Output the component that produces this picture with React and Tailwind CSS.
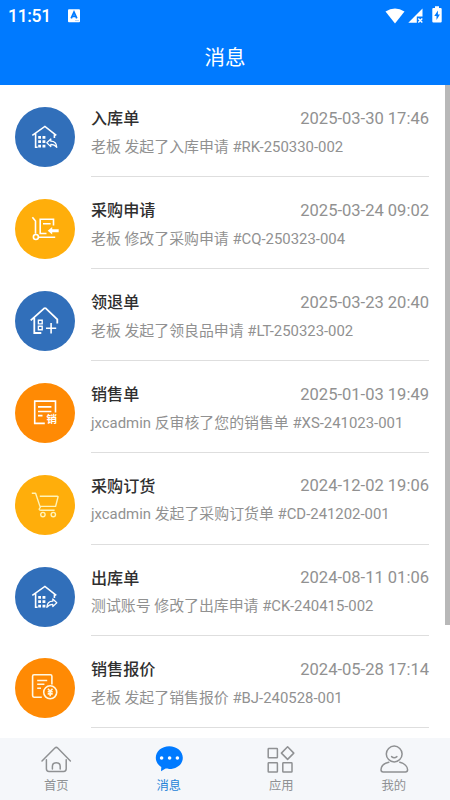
import React from 'react'

const MESSAGES = [
  { title: '入库单', time: '2025-03-30 17:46', text: '老板 发起了入库申请 #RK-250330-002', icon: StockInIcon, color: 'bg-[#316fba]' },
  { title: '采购申请', time: '2025-03-24 09:02', text: '老板 修改了采购申请 #CQ-250323-004', icon: TrolleyIcon, color: 'bg-[#ffae0b]' },
  { title: '领退单', time: '2025-03-23 20:40', text: '老板 发起了领良品申请 #LT-250323-002', icon: HousePlusIcon, color: 'bg-[#316fba]' },
  { title: '销售单', time: '2025-01-03 19:49', text: 'jxcadmin 反审核了您的销售单 #XS-241023-001', icon: SaleIcon, color: 'bg-[#ff8a04]' },
  { title: '采购订货', time: '2024-12-02 19:06', text: 'jxcadmin 发起了采购订货单 #CD-241202-001', icon: CartIcon, color: 'bg-[#ffae0b]' },
  { title: '出库单', time: '2024-08-11 01:06', text: '测试账号 修改了出库申请 #CK-240415-002', icon: StockOutIcon, color: 'bg-[#316fba]' },
  { title: '销售报价', time: '2024-05-28 17:14', text: '老板 发起了销售报价 #BJ-240528-001', icon: QuoteIcon, color: 'bg-[#ff8a04]' },
]

const TABS = [
  { label: '首页', icon: HomeTab },
  { label: '消息', icon: ChatTab, active: true },
  { label: '应用', icon: AppsTab },
  { label: '我的', icon: MineTab },
]

function Glyph({ children }) {
  return (
    <svg viewBox="0 0 60 60" className="w-full h-full" fill="none" stroke="#fff" strokeWidth="1.6">
      {children}
    </svg>
  )
}

function Warehouse() {
  return (
    <>
      <path d="M17.3 28.3 L29.9 19.4 L41.3 28.3 M20.6 26.5 V40.3 H22.6 M39.4 27 V31" />
      <path fill="#fff" stroke="none" d="M23.2 29h2.8v2.8h-2.8z M27.5 29h2.9v2.8h-2.9z M23.2 33.3h2.8v2.8h-2.8z M27.5 33.3h2.9v2.8h-2.9z M23.2 37.8h2.8v2.8h-2.8z M27.5 37.8h2.9v2.8h-2.9z" />
    </>
  )
}

function StockInIcon() {
  return (
    <Glyph>
      <Warehouse />
      <path strokeWidth="1.2" strokeLinejoin="round" d="M31.8 35.7 L35.8 32 V34.2 C39.6 34.2 41.6 36.5 41.8 40.4 C40 38.1 38.4 37.4 35.8 37.4 V39.6 Z" />
    </Glyph>
  )
}

function StockOutIcon() {
  return (
    <Glyph>
      <Warehouse />
      <path strokeWidth="1.2" strokeLinejoin="round" d="M41.8 35.7 L37.8 32 V34.2 C34 34.2 32 36.5 31.8 40.4 C33.6 38.1 35.2 37.4 37.8 37.4 V39.6 Z" />
    </Glyph>
  )
}

function TrolleyIcon() {
  return (
    <Glyph>
      <path d="M17.4 18.2 L20.5 22 V34.8 M23.2 38.3 H40.2" />
      <circle cx="20.9" cy="38" r="2.5" />
      <path d="M38.5 26.5 V20.3 H25.2 V34.5 H31.5 M28 24.8 H35.6" />
      <path fill="#fff" stroke="none" d="M32.7 31.7 L37.2 27.9 V30.2 H43.7 V33.2 H37.2 V35.6 Z" />
    </Glyph>
  )
}

function HousePlusIcon() {
  return (
    <Glyph>
      <path strokeWidth="1.8" d="M15.7 29.4 L28.9 17.6 Q30 16.8 31.1 17.6 L42.3 28.4 V32.6 M19.3 26.8 V42 H26.3" />
      <path strokeWidth="1.4" d="M23.4 29.3h3.8v3.6h-3.8z M23.4 35.2h3.8v3.6h-3.8z" />
      <path d="M31 37.2 H41.2 M36.1 32 V42.5" />
    </Glyph>
  )
}

function SaleIcon() {
  return (
    <Glyph>
      <path d="M40.5 29.5 V18.1 H19.7 V40.4 H29.8 M23 23.9 H36.4 M23 28.5 H36.4 M23 32.6 H27.5" />
      <text x="31.6" y="40.3" fill="#fff" stroke="none" className="text-[10.5px] font-bold font-['Noto_Sans_CJK_SC',sans-serif]">销</text>
    </Glyph>
  )
}

function CartIcon() {
  return (
    <Glyph>
      <g stroke="#fff3b8" strokeWidth="1.4" strokeLinejoin="round">
        <path d="M16.8 18.2 H20.6 L25.3 32.4 Q22.8 35.2 25.8 35.2 H39.6 M24.8 21.2 H42.3 Q43.2 21.2 43 22 L40.6 31.4 H25" />
        <circle cx="27.9" cy="39.6" r="2.2" />
        <circle cx="38.3" cy="39.6" r="2.2" />
      </g>
    </Glyph>
  )
}

function QuoteIcon() {
  return (
    <Glyph>
      <g stroke="#fff8e4">
        <path d="M36.9 26.5 V18.2 Q36.9 16.7 35.4 16.7 H19 Q17.6 16.7 17.6 18.2 V37.6 Q17.6 39.2 19 39.2 H26.8" />
        <path d="M22.2 22.5 H32.2 M22.2 26.2 H29.4 M22.2 30.2 H26" />
        <circle cx="35.2" cy="34.3" r="6.5" />
        <path d="M32.9 30.8 L35.2 33.3 L37.5 30.8 M35.2 33.3 V38.2 M32.7 33.8 H37.7 M32.7 35.9 H37.7" />
      </g>
    </Glyph>
  )
}

function HomeTab() {
  return (
    <svg viewBox="0 0 32 30" className="w-8 h-[30px]" fill="none" stroke="#8f9193" strokeWidth="1.5" strokeLinecap="round">
      <path d="M2 16 L14.9 3 Q16.3 1.7 17.7 3 L30.4 16" />
      <path d="M6.4 14.8 V23.8 Q6.4 26.5 9 26.5 H23.6 Q26.2 26.5 26.2 23.8 V14.8" />
      <path d="M12.4 24 V21.5 Q12.4 17.7 16.3 17.7 Q20.2 17.7 20.2 21.5 V24" />
    </svg>
  )
}

function ChatTab() {
  return (
    <svg viewBox="0 0 32 30" className="w-8 h-[30px]">
      <path fill="#007aff" d="M16.2 1.2 C23.8 1.2 29.8 6.2 29.8 12.8 C29.8 19.5 23.8 24 16.2 24 C14.8 24 13.4 23.8 12.6 23.6 L8 26.2 L8.3 22.1 C5 20 2.8 16.7 2.8 12.8 C2.8 6.2 8.7 1.2 16.2 1.2 Z" />
      <g fill="#fff">
        <circle cx="8.6" cy="13" r="1.8" />
        <circle cx="16.6" cy="13" r="1.8" />
        <circle cx="24.4" cy="13" r="1.8" />
      </g>
    </svg>
  )
}

function AppsTab() {
  return (
    <svg viewBox="0 0 32 30" className="w-8 h-[30px]" fill="none" stroke="#8f9193" strokeWidth="1.5" strokeLinejoin="round">
      <rect x="3.2" y="3.6" width="9.2" height="9.2" rx="0.6" />
      <path d="M22.6 1.8 L28.8 8.1 L22.6 14.4 L16.4 8.1 Z" />
      <rect x="3.2" y="17.8" width="9.2" height="9.2" rx="0.6" />
      <rect x="17.8" y="17.8" width="9.2" height="9.2" rx="0.6" />
    </svg>
  )
}

function MineTab() {
  return (
    <svg viewBox="0 0 32 30" className="w-8 h-[30px]" fill="none" stroke="#8f9193" strokeWidth="1.5" strokeLinecap="round">
      <circle cx="16.2" cy="9" r="7.9" />
      <path d="M13.6 11.6 Q16.2 13.8 18.9 11.6" />
      <path d="M10.8 17.2 C6 18.4 3 21.6 3 24.8 Q3 27 5.2 27 H27.4 Q29.6 27 29.6 24.8 C29.6 21.6 26.5 18.4 21.8 17.2" />
    </svg>
  )
}

function StatusBar() {
  return (
    <div className="flex items-center h-8 pl-[8px] pr-[8px]">
      <span className="text-[17.5px] leading-none font-medium w-[44px] whitespace-nowrap tracking-[-0.3px] pt-px">11:51</span>
      <svg viewBox="0 0 12 14" className="w-3 h-[14px] ml-4">
        <rect width="12" height="13" y="0.2" rx="1" fill="#fff" />
        <path d="M3.2 9.4 L6 3.2 L8.8 9.4 M4.3 7.4 H7.7" fill="none" stroke="#007aff" strokeWidth="1.8" />
        <path d="M7 11.6 H11" stroke="#9cc8f8" strokeWidth="0.8" />
      </svg>
      <div className="ml-auto flex items-center -mt-px">
        <svg viewBox="0 0 20 16" className="w-5 h-4">
          <path fill="#fff" d="M0.5 3.6 Q10 -2.8 19.5 3.6 L10 15.6 Z" />
        </svg>
        <svg viewBox="0 0 15 15" className="w-[15px] h-[15px] ml-[3px]">
          <path fill="#fff" d="M14.5 0.5 V8.5 H8.8 V14.8 H0.3 Z" />
          <path stroke="#fff" strokeWidth="1.4" d="M10.3 10.4 L14.3 14.4 M14.3 10.4 L10.3 14.4" />
        </svg>
        <svg viewBox="0 0 10 17" className="w-[10px] h-[17px] ml-[9px] -mt-[2px]">
          <path fill="#fff" d="M3 0.3 H7 V2 H8.6 Q9.7 2 9.7 3.1 V15.5 Q9.7 16.6 8.6 16.6 H1.4 Q0.3 16.6 0.3 15.5 V3.1 Q0.3 2 1.4 2 H3 Z" />
          <path fill="#007aff" d="M5.9 4.5 L2.3 10 H4.5 V14 L7.9 8.4 H5.9 Z" />
        </svg>
      </div>
    </div>
  )
}

function MessageRow({ item }) {
  const Icon = item.icon
  return (
    <div className="flex h-[91.85px] pl-[15px] pr-[21px]">
      <div className={`w-[60px] h-[60px] mt-[22px] shrink-0 rounded-full ${item.color}`}>
        <Icon />
      </div>
      <div className="flex-1 ml-4 border-b border-[#dedede] pt-[22px]">
        <div className="flex items-center justify-between h-6">
          <span className="text-[16.1px] font-medium text-[#2f2f2f]">{item.title}</span>
          <span className="text-[16.55px] text-[#919191] whitespace-nowrap">{item.time}</span>
        </div>
        <div className="mt-[4.6px] h-[22px] leading-[22px] text-[14.9px] text-[#919191] whitespace-nowrap">{item.text}</div>
      </div>
    </div>
  )
}

export default function App() {
  return (
    <div className="w-[450px] h-[800px] flex flex-col overflow-hidden bg-white font-[Roboto,'Noto_Sans_CJK_SC',sans-serif]">
      <header className="h-[85px] shrink-0 bg-[#007aff] text-white">
        <StatusBar />
        <h1 className="h-[52px] flex items-center justify-center text-[20.5px]">消息</h1>
      </header>

      <main className="flex-1 min-h-0 flex overflow-hidden">
        <div className="w-[450px] shrink-0 pt-[0.4px]">
          {MESSAGES.map(item => (
            <MessageRow key={item.title} item={item} />
          ))}
        </div>
        <div className="-ml-[5px] w-[5px] h-[540px] shrink-0 bg-[#b8b8b8]" />
      </main>

      <nav className="h-[62px] shrink-0 grid grid-cols-4 bg-[#f5f7fa]">
        {TABS.map(({ label, icon: Icon, active }) => (
          <div key={label} className="flex flex-col items-center pt-[7px]">
            <Icon />
            <span className={`text-[12.3px] leading-[18px] mt-[2px] ${active ? 'text-[#2583d8]' : 'text-[#8f9193]'}`}>{label}</span>
          </div>
        ))}
      </nav>
    </div>
  )
}
